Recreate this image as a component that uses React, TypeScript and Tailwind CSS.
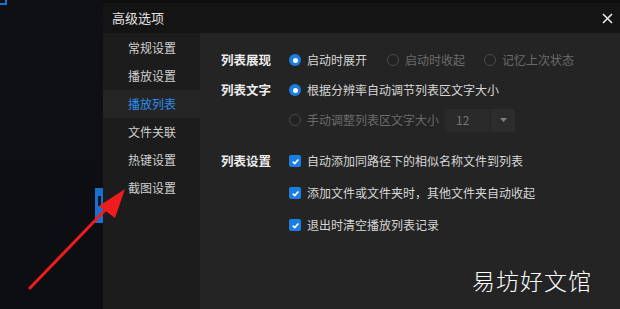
import React from "react";

const FONT = { fontFamily: '"Noto Sans CJK SC", "Noto Sans", sans-serif' };

const MENU = ["常规设置", "播放设置", "播放列表", "文件关联", "热键设置", "截图设置"];

function Radio({ checked, label, disabled }: { checked?: boolean; label: string; disabled?: boolean }) {
  return (
    <div className="flex items-center gap-[6px]">
      {checked ? (
        <span className="w-[12px] h-[12px] rounded-full bg-[#1a7fe0] flex items-center justify-center">
          <span className="w-[5px] h-[5px] rounded-full bg-white" />
        </span>
      ) : (
        <span className="w-[12px] h-[12px] rounded-full border border-[#4a4a4a] bg-[#222]" />
      )}
      <span className={disabled ? "text-[#6b6b6b]" : "text-[#d6d6d6]"}>{label}</span>
    </div>
  );
}

function Check({ label }: { label: string }) {
  return (
    <div className="flex items-center gap-[6px] h-[32px]">
      <span className="w-[12px] h-[12px] rounded-[2px] bg-[#1a7fe0] flex items-center justify-center">
        <svg width="9" height="9" viewBox="0 0 10 10">
          <path d="M2 5.2 L4.2 7.3 L8.2 2.8" stroke="white" strokeWidth="1.8" fill="none" />
        </svg>
      </span>
      <span className="text-[#d6d6d6]">{label}</span>
    </div>
  );
}

export default function App() {
  return (
    <div className="relative w-[620px] h-[309px] flex overflow-hidden text-[12px]" style={FONT}>
      {/* 背景 */}
      <div className="relative w-[103px] h-full bg-gradient-to-b from-[#0f1013] to-[#0c0e12]">
        <div className="absolute left-0 top-0 w-[7px] h-[5px] border-r-2 border-b-2 border-[#1d6fd6]" />
        <div className="absolute left-[95px] top-[188px] w-[8px] h-[35px] bg-[#1a6fd0]">
          <div className="ml-[3px] mt-[8px] w-[3px] h-[10px] bg-[#0d1a2a]" />
        </div>
      </div>

      {/* 高级选项 */}
      <div className="flex-1 flex flex-col">
        <div className="h-[33px] bg-[#141414] flex items-center justify-between pl-[9px] pr-[7px] border-t-[3px] border-[#0e0e0e]">
          <span className="text-[#e2e2e2] text-[13px]">高级选项</span>
          <svg width="11" height="11" viewBox="0 0 11 11">
            <path d="M1 1 L10 10 M10 1 L1 10" stroke="#e8e8e8" strokeWidth="1.6" />
          </svg>
        </div>
        <div className="flex-1 flex">
          <div className="w-[97px] bg-[#1c1c1c] pt-[1px]">
            {MENU.map((m) => (
              <div
                key={m}
                className={`h-[28px] flex items-center pl-[25px] ${
                  m === "播放列表" ? "bg-[#252525] text-[#2a8df0]" : "text-[#cfcfcf]"
                }`}
              >
                {m}
              </div>
            ))}
          </div>

          <div className="flex-1 bg-[#242424] pl-[21px] pt-[12px]">
            <div className="flex h-[30px] items-center">
              <span className="w-[68px] text-[#ececec] text-[12.5px] font-bold">列表展现</span>
              <div className="w-[98px]"><Radio checked label="启动时展开" /></div>
              <div className="w-[97px]"><Radio disabled label="启动时收起" /></div>
              <Radio disabled label="记忆上次状态" />
            </div>
            <div className="flex h-[30px] items-center">
              <span className="w-[68px] text-[#ececec] text-[12.5px] font-bold">列表文字</span>
              <Radio checked label="根据分辨率自动调节列表区文字大小" />
            </div>
            <div className="flex h-[30px] items-center">
              <span className="w-[68px]" />
              <div className="w-[156px]"><Radio disabled label="手动调整列表区文字大小" /></div>
              <div className="flex h-[23px]">
                <div className="w-[45px] bg-[#2a2a2a] text-[#767676] flex items-center pl-[11px]">12</div>
                <div className="w-[24px] ml-[1px] bg-[#2c2c2c] flex items-center justify-center">
                  <svg width="7" height="4" viewBox="0 0 7 4"><path d="M0 0 H7 L3.5 4 Z" fill="#808080" /></svg>
                </div>
              </div>
            </div>
            <div className="flex mt-[10px]">
              <span className="w-[68px] h-[32px] flex items-center text-[#ececec] text-[12.5px] font-bold">列表设置</span>
              <div className="flex flex-col">
                <Check label="自动添加同路径下的相似名称文件到列表" />
                <Check label="添加文件或文件夹时，其他文件夹自动收起" />
                <Check label="退出时清空播放列表记录" />
              </div>
            </div>
            <div className="flex justify-end pr-[28px] mt-[22px]">
              <span className="text-white text-[23px] font-light tracking-[1px]">易坊好文馆</span>
            </div>
          </div>
        </div>
      </div>

      {/* 红色箭头 */}
      <svg className="absolute left-0 top-0 pointer-events-none" width="620" height="309">
        <line x1="30" y1="288" x2="110" y2="205" stroke="#ee1c1c" strokeWidth="3" strokeLinecap="round" />
        <path d="M125 189 L99 206 L115 218 Z" fill="#ee1c1c" />
      </svg>
    </div>
  );
}
